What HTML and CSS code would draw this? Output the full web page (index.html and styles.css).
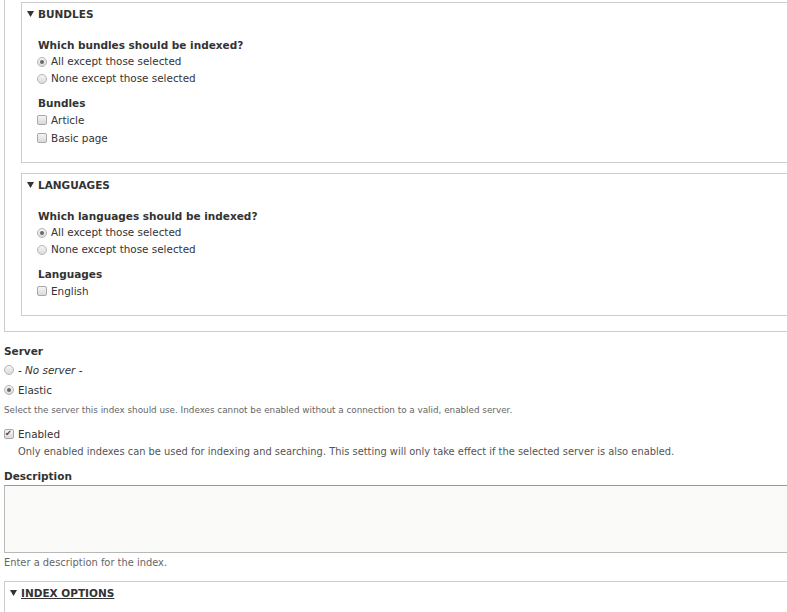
FILE: index.html
```html
<!DOCTYPE html>
<html>
	<head>
		<meta charset="utf-8">
		<title>Index settings</title>
		<link rel="stylesheet" href="styles.css">
	</head>
	<body>
		<div class="outer">
			<!-- bundles -->
			<div class="box">
				<div class="box-title">
					<svg class="tri" width="7" height="6" viewBox="0 0 7 6"><path d="M0 0H7L3.5 6Z" fill="#333"/></svg>
					<span>BUNDLES</span>
				</div>
				<div class="box-body">
					<div class="group-label">Which bundles should be indexed?</div>
					<label class="opt"><span class="radio on"></span>All except those selected</label>
					<label class="opt"><span class="radio"></span>None except those selected</label>
					<div class="group-label gap">Bundles</div>
					<label class="opt chk"><span class="check"></span>Article</label>
					<label class="opt chk"><span class="check"></span>Basic page</label>
				</div>
			</div>
			<!-- languages -->
			<div class="box second">
				<div class="box-title">
					<svg class="tri" width="7" height="6" viewBox="0 0 7 6"><path d="M0 0H7L3.5 6Z" fill="#333"/></svg>
					<span>LANGUAGES</span>
				</div>
				<div class="box-body">
					<div class="group-label">Which languages should be indexed?</div>
					<label class="opt"><span class="radio on"></span>All except those selected</label>
					<label class="opt"><span class="radio"></span>None except those selected</label>
					<div class="group-label gap">Languages</div>
					<label class="opt chk"><span class="check"></span>English</label>
				</div>
			</div>
		</div>

		<div class="form">
			<div class="field-label server">Server</div>
			<label class="opt srv"><span class="radio"></span><em>- No server -</em></label>
			<label class="opt srv"><span class="radio on"></span>Elastic</label>
			<div class="desc small">Select the server this index should use. Indexes cannot be enabled without a connection to a valid, enabled server.</div>

			<label class="opt enabled"><span class="check on"></span>Enabled</label>
			<div class="enabled-desc">Only enabled indexes can be used for indexing and searching. This setting will only take effect if the selected server is also enabled.</div>

			<div class="field-label descr">Description</div>
			<div class="textarea"></div>
			<div class="desc">Enter a description for the index.</div>

			<div class="box options">
				<div class="box-title">
					<svg class="tri" width="7" height="6" viewBox="0 0 7 6"><path d="M0 0H7L3.5 6Z" fill="#333"/></svg>
					<span class="link">INDEX OPTIONS</span>
				</div>
			</div>
		</div>
	</body>
</html>
```

FILE: styles.css
```css
body {
	margin: 0;
	background: #fff;
	color: #333;
	font-family: "DejaVu Sans", "Liberation Sans", sans-serif;
	font-size: 10.4px;
	overflow: hidden;
}
.outer {
	margin: 0 -20px 0 4px;
	padding: 2px 0 15px 16px;
	border: 1px solid #ccc;
	border-top: 0;
}
.box {
	margin-right: -20px;
	border: 1px solid #ccc;
}
.box.second {
	margin-top: 10px;
}
.box-title {
	display: flex;
	align-items: center;
	gap: 4px;
	padding: 3px 0 0 5px;
	line-height: 16px;
	font-size: 10.5px;
	font-weight: bold;
}
.box-body {
	padding: 15px 0 15px 16px;
}
.group-label,
.field-label {
	font-weight: bold;
	font-size: 10.5px;
	line-height: 16px;
}
.group-label.gap {
	margin-top: 8px;
}
.opt {
	display: flex;
	align-items: center;
	gap: 4px;
	line-height: 17px;
	margin-left: -1px;
}
.opt.chk {
	line-height: 18px;
}
.radio {
	width: 8px;
	height: 8px;
	border: 1px solid #b4b4b4;
	border-radius: 50%;
	background: linear-gradient(#f4f4f4, #dcdcdc);
	display: inline-block;
	position: relative;
}
.radio.on::after {
	content: "";
	position: absolute;
	left: 2px;
	top: 2px;
	width: 4px;
	height: 4px;
	border-radius: 50%;
	background: #6a6a6a;
}
.check {
	width: 8px;
	height: 8px;
	border: 1px solid #a8a8a8;
	border-radius: 2px;
	background: linear-gradient(#f4f4f4, #dadada);
	display: inline-block;
	position: relative;
}
.check.on::after {
	content: "✔";
	position: absolute;
	left: 0;
	top: -4px;
	font-size: 8px;
	color: #444;
}
.form {
	padding: 11px 0 0 4px;
}
.field-label.server {
	margin-bottom: 1px;
}
.opt.srv {
	line-height: 20px;
	margin-left: 0;
}
.opt.srv em {
	font-style: italic;
}
.desc {
	font-size: 9.9px;
	line-height: 14px;
	color: #666;
	margin-top: 3px;
}
.desc.small {
	font-size: 8.8px;
}
.opt.enabled {
	margin: 9px 0 0;
	line-height: 16px;
}
.enabled-desc {
	margin: 2px 0 0 14px;
	font-size: 9.9px;
	line-height: 16px;
	color: #555;
}
.field-label.descr {
	margin: 8px 0 1px;
}
.textarea {
	height: 66px;
	margin-right: -20px;
	border: 1px solid #b8b8b8;
	border-top-color: #999;
	background: #fafaf9;
}
.box.options {
	margin-top: 11px;
	height: 40px;
}
.box.options .box-title {
	padding: 3px 0 0 5px;
}
.link {
	text-decoration: underline;
}
```
